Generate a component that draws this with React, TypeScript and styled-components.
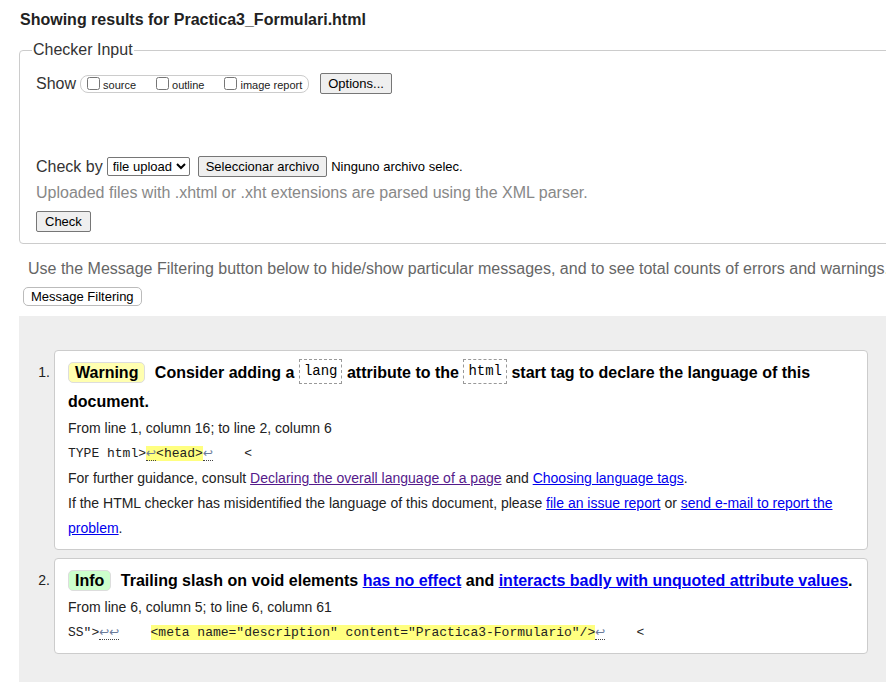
import React from 'react';
import styled, { createGlobalStyle } from 'styled-components';

const GlobalStyle = createGlobalStyle`
  html, body {
    margin: 0;
    padding: 0;
    background: #fff;
    overflow: hidden;
  }
  body {
    font-family: "Liberation Sans", Arial, sans-serif;
    color: #222;
  }
`;

const Page = styled.div`
  width: 905px;
  padding-bottom: 40px;
`;

const Title = styled.h2`
  margin: 11px 0 0 20px;
  font-size: 16px;
  line-height: 18px;
  font-weight: bold;
  color: #222;
`;

const Fieldset = styled.fieldset`
  margin: 12px 0 0 19px;
  padding: 0 16px 11px 16px;
  border: 1px solid #ccc;
  border-radius: 4px;
  min-width: 0;
`;

const Legend = styled.legend`
  margin-left: -4px;
  padding: 0 1px;
  font-size: 16px;
  line-height: 18px;
  color: #333;
`;

const Row = styled.div<{ $top: number }>`
  display: flex;
  align-items: center;
  height: 21px;
  margin-top: ${p => p.$top}px;
  font-size: 16px;
  color: #333;
`;

const Label = styled.span`
  margin-right: 4px;
`;

const CheckGroup = styled.span`
  display: inline-flex;
  align-items: center;
  height: 16px;
  padding: 0 6px 0 6px;
  border: 1px solid #ccc;
  border-radius: 8px;
  gap: 20px;
  margin-right: 11px;
`;

const CheckItem = styled.label`
  display: inline-flex;
  align-items: center;
  gap: 3px;
  font-size: 11px;
  color: #222;
  padding-top: 2px;
`;

const Box = styled.input`
  width: 13px;
  height: 13px;
  margin: 0 0 2px 0;
`;

const Button = styled.button`
  height: 21px;
  padding: 0 7px;
  font-family: "Liberation Sans", Arial, sans-serif;
  font-size: 13px;
  color: #000;
  background: #efefef;
  border: 1px solid #767676;
  border-radius: 2px;
`;

const Select = styled.select`
  height: 19px;
  padding: 0 0 0 1px;
  margin-right: 8px;
  font-family: "Liberation Sans", Arial, sans-serif;
  font-size: 13px;
  color: #000;
  background: #fff;
  border: 1px solid #767676;
  border-radius: 2px;
`;

const FileName = styled.span`
  margin-left: 4px;
  font-size: 13px;
  color: #000;
`;

const Note = styled.p<{ $top: number; $left?: number; $color: string }>`
  margin: ${p => p.$top}px 0 0 ${p => p.$left ?? 0}px;
  font-size: 16px;
  line-height: 20px;
  color: ${p => p.$color};
  white-space: nowrap;
`;

const CheckButton = styled(Button)`
  margin-top: 8px;
  padding: 0 8px;
`;

const FilterButton = styled.button`
  display: block;
  margin: 8px 0 0 23px;
  height: 19px;
  padding: 0 7px;
  font-family: "Liberation Sans", Arial, sans-serif;
  font-size: 13px;
  color: #000;
  background: #fff;
  border: 1px solid #bbb;
  border-radius: 5px;
`;

const Results = styled.ol`
  list-style: none;
  margin: 10px 0 0 19px;
  padding: 34px 37px 40px 0;
  background: #eee;
  display: flex;
  flex-direction: column;
  gap: 8px;
`;

const Item = styled.li`
  display: flex;
  align-items: flex-start;
`;

const Num = styled.span`
  width: 31px;
  padding: 8px 4px 0 0;
  text-align: right;
  font-size: 14px;
  line-height: 29px;
  color: #222;
`;

const Card = styled.div`
  flex: 1;
  background: #fff;
  border: 1px solid #ccc;
  border-radius: 4px;
  padding: 7px 13px 8px;
`;

const Heading = styled.p`
  margin: 0;
  font-size: 16px;
  line-height: 29px;
  font-weight: bold;
  color: #000;
`;

const Badge = styled.span<{ $bg: string }>`
  display: inline-block;
  line-height: 19px;
  padding: 0 6px;
  margin-right: 5px;
  background: ${p => p.$bg};
  border: 1px solid #ddd;
  border-radius: 5px;
`;

const Code = styled.code`
  display: inline-block;
  font-family: "Liberation Mono", "DejaVu Sans Mono", monospace;
  font-weight: normal;
  font-size: 14px;
  line-height: 21px;
  padding: 1px 4px;
  border: 1px dashed #999;
  vertical-align: middle;
  margin-top: -4px;
`;

const Line = styled.p`
  margin: 0;
  font-size: 14px;
  line-height: 25px;
  color: #222;
`;

const Extract = styled.p`
  margin: 0;
  height: 25px;
  font-family: "Liberation Mono", "DejaVu Sans Mono", monospace;
  font-size: 13px;
  line-height: 25px;
  color: #222;
  white-space: pre;
`;

const Mark = styled.b`
  font-weight: normal;
  background: #ffff80;
`;

const Ret = styled.span`
  font-family: "DejaVu Sans", sans-serif;
  font-size: 12px;
  line-height: 14px;
  color: #6a7a99;
  border-bottom: 1px dotted #444;
`;

const Link = styled.a<{ $visited?: boolean }>`
  color: ${p => (p.$visited ? '#551a8b' : '#0000ee')};
  text-decoration: underline;
`;

const App = () => {
  return (
    <>
      <GlobalStyle />
      <Page>
        <Title>Showing results for Practica3_Formulari.html</Title>

        <Fieldset>
          <Legend>Checker Input</Legend>
          <Row $top={14}>
            <Label>Show</Label>
            <CheckGroup>
              <CheckItem><Box type="checkbox" />source</CheckItem>
              <CheckItem><Box type="checkbox" />outline</CheckItem>
              <CheckItem><Box type="checkbox" />image report</CheckItem>
            </CheckGroup>
            <Button>Options...</Button>
          </Row>
          <Row $top={62}>
            <Label>Check by</Label>
            <Select defaultValue="file">
              <option value="file">file upload</option>
            </Select>
            <Button>Seleccionar archivo</Button>
            <FileName>Ninguno archivo selec.</FileName>
          </Row>
          <Note $top={6} $color="#888">
            Uploaded files with .xhtml or .xht extensions are parsed using the XML parser.
          </Note>
          <CheckButton>Check</CheckButton>
        </Fieldset>

        <Note $top={15} $left={28} $color="#666">
          Use the Message Filtering button below to hide/show particular messages, and to see total counts of errors and warnings.
        </Note>
        <FilterButton>Message Filtering</FilterButton>

        <Results>
          <Item>
            <Num>1.</Num>
            <Card>
              <Heading>
                <Badge $bg="#ffffb0">Warning</Badge> Consider adding a <Code>lang</Code> attribute to the{' '}
                <Code>html</Code> start tag to declare the language of this document.
              </Heading>
              <Line>From line 1, column 16; to line 2, column 6</Line>
              <Extract>
                TYPE html&gt;<Mark><Ret>↩</Ret>&lt;head&gt;</Mark><Ret>↩</Ret>{'    <'}
              </Extract>
              <Line>
                For further guidance, consult{' '}
                <Link href="#" $visited>Declaring the overall language of a page</Link> and{' '}
                <Link href="#">Choosing language tags</Link>.
              </Line>
              <Line>
                If the HTML checker has misidentified the language of this document, please{' '}
                <Link href="#">file an issue report</Link> or{' '}
                <Link href="#">send e-mail to report the problem</Link>.
              </Line>
            </Card>
          </Item>
          <Item>
            <Num>2.</Num>
            <Card>
              <Heading>
                <Badge $bg="#ccffcc">Info</Badge> Trailing slash on void elements{' '}
                <Link href="#">has no effect</Link> and{' '}
                <Link href="#">interacts badly with unquoted attribute values</Link>.
              </Heading>
              <Line>From line 6, column 5; to line 6, column 61</Line>
              <Extract>
                SS"&gt;<Ret>↩↩</Ret>{'    '}
                <Mark>&lt;meta name="description" content="Practica3-Formulario"/&gt;</Mark>
                <Ret>↩</Ret>{'    <'}
              </Extract>
            </Card>
          </Item>
        </Results>
      </Page>
    </>
  );
};

export default App;
